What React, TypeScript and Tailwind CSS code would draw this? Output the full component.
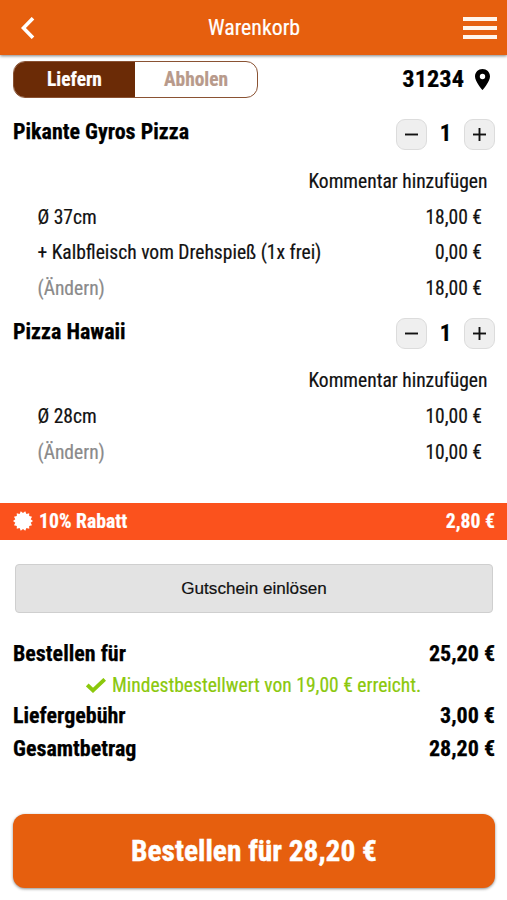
import React from "react";

type Option = { label: string; price: string; muted?: boolean };
type Item = { name: string; qty: number; options: Option[] };

const items: Item[] = [
  {
    name: "Pikante Gyros Pizza",
    qty: 1,
    options: [
      { label: "Ø 37cm", price: "18,00 €" },
      { label: "+ Kalbfleisch vom Drehspieß (1x frei)", price: "0,00 €" },
      { label: "(Ändern)", price: "18,00 €", muted: true },
    ],
  },
  {
    name: "Pizza Hawaii",
    qty: 1,
    options: [
      { label: "Ø 28cm", price: "10,00 €" },
      { label: "(Ändern)", price: "10,00 €", muted: true },
    ],
  },
];

function Stepper({ plus }: { plus?: boolean }) {
  return (
    <button className="flex h-[31px] w-[31px] items-center justify-center rounded-[9px] border border-[#dcdcdc] bg-[#efefef]">
      <svg width="13" height="13" viewBox="0 0 13 13" stroke="#111" strokeWidth="1.9">
        <path d="M0 6.5H13" />
        {plus && <path d="M6.5 0V13" />}
      </svg>
    </button>
  );
}

function CartItem({ item }: { item: Item }) {
  return (
    <section>
      <div className="flex h-[57px] justify-between pl-[13px] pr-3">
        <h2 className="mt-[12px] h-7 text-[22px] leading-7 font-bold text-black [-webkit-text-stroke:0.25px]">{item.name}</h2>
        <div className="mt-[12.5px] flex h-[31px] items-center">
          <Stepper />
          <span className="w-[37px] pt-px text-center text-[23px] font-bold text-black">{item.qty}</span>
          <Stepper plus />
        </div>
      </div>
      <div className="flex h-9 items-center justify-end pt-px pr-[19.5px]">Kommentar hinzufügen</div>
      {item.options.map((o) => (
        <div key={o.label} className="flex h-[35.5px] items-center justify-between pt-[1.5px] pl-[37.5px] pr-[25px]">
          <span className={o.muted ? "text-[#8a8a8a]" : ""}>{o.label}</span>
          <span>{o.price}</span>
        </div>
      ))}
    </section>
  );
}

function Total({ label, value }: { label: string; value: string }) {
  return (
    <div className="flex h-[32.5px] items-center justify-between pl-[13px] pr-3 text-[22px] font-bold text-black [-webkit-text-stroke:0.25px]">
      <span>{label}</span>
      <span>{value}</span>
    </div>
  );
}

// Fourteen-pointed seal outline.
const sealPoints = Array.from({ length: 28 }, (_, i) => {
  const r = i % 2 ? 10 : 7.9;
  const a = (i * Math.PI) / 14;
  return `${(10 + r * Math.sin(a)).toFixed(2)},${(10 - r * Math.cos(a)).toFixed(2)}`;
}).join(" ");

export default function App() {
  return (
    <main className="flex h-[900px] w-full flex-col overflow-hidden bg-white font-['Roboto_Condensed','Roboto',sans-serif] text-[19.55px] text-[#111] [-webkit-text-stroke:0.2px] [font-stretch:75%]">
      <header className="flex h-[55px] shrink-0 items-center justify-between bg-[#e65f0e] pl-[21px] pr-[10px] text-white shadow-[0_1px_3px_rgba(0,0,0,0.5)]">
        <svg width="24" height="22" viewBox="0 0 24 22" fill="none" stroke="white" strokeWidth="3.6">
          <path d="M12 1.2L2.4 11L12 20.8" />
        </svg>
        <h1 className="pt-[2px] text-[21.8px]">Warenkorb</h1>
        <div className="flex flex-col gap-[5px] pt-px">
          <i className="h-1 w-[34px] bg-[#fff5ec]" />
          <i className="h-1 w-[34px] bg-[#fff5ec]" />
          <i className="h-1 w-[34px] bg-[#fff5ec]" />
        </div>
      </header>

      <div className="mt-[6px] flex h-9 shrink-0 items-center justify-between pl-[13px] pr-[17px]">
        <div className="flex h-[37px] w-[245px] overflow-hidden rounded-[12px] border border-[#8a5233] text-[19.4px] font-bold">
          <span className="flex w-[121px] items-center justify-center bg-[#6b2b06] pt-[1.5px] text-white">Liefern</span>
          <span className="flex flex-1 items-center justify-center pt-[1.5px] text-[#b89a8b]">Abholen</span>
        </div>
        <div className="flex items-center gap-[11px] text-[24.4px] font-bold text-black">
          <span>31234</span>
          <svg width="15" height="21" viewBox="0 0 15 21">
            <path fillRule="evenodd" fill="#000" d="M7.5 0C3.3 0 0 3.2 0 7.4C0 12.6 7.5 21 7.5 21S15 12.6 15 7.4C15 3.2 11.7 0 7.5 0ZM7.5 4.8A2.7 2.7 0 1 1 7.5 10.2A2.7 2.7 0 1 1 7.5 4.8Z" />
          </svg>
        </div>
      </div>

      <div className="mt-[9px] shrink-0">
        {items.map((item) => (
          <CartItem key={item.name} item={item} />
        ))}
      </div>

      <div className="mt-[33.5px] flex h-[36.5px] shrink-0 items-center justify-between bg-[#fb521d] pt-px pl-[13px] pr-3 text-[19.7px] font-bold text-white">
        <span className="flex items-center gap-[6px]">
          <svg className="-mt-px" width="20" height="20" viewBox="0 0 20 20">
            <polygon points={sealPoints} fill="white" />
          </svg>
          10% Rabatt
        </span>
        <span>2,80 €</span>
      </div>

      <button className="mt-6 mr-[14px] ml-[15px] flex h-[49px] shrink-0 items-center justify-center rounded-[4px] border border-[#cfcfcf] bg-[#e3e3e3] pt-[2px] font-['Liberation_Sans',Arial,sans-serif] text-[17.1px] [font-stretch:100%]">
        Gutschein einlösen
      </button>

      <div className="mt-[24.5px] shrink-0">
        <Total label="Bestellen für" value="25,20 €" />
        <p className="flex h-[30px] items-center gap-[6px] pt-[1.5px] pl-[86px] text-[#8bc80c]">
          <svg width="20" height="15" viewBox="0 0 20 15" fill="none" stroke="#8bc80c" strokeWidth="3.8">
            <path d="M1.3 7L7 12.4L18.7 1.3" />
          </svg>
          Mindestbestellwert von 19,00 € erreicht.
        </p>
        <Total label="Liefergebühr" value="3,00 €" />
        <Total label="Gesamtbetrag" value="28,20 €" />
      </div>

      <button className="mt-[49.5px] mr-3 ml-[13px] flex h-[74px] shrink-0 items-center justify-center rounded-[12px] bg-[#e65f0e] text-[29.4px] font-bold text-white shadow-[0_1px_3px_rgba(0,0,0,0.45)] [-webkit-text-stroke:0.4px]">
        Bestellen für 28,20 €
      </button>
    </main>
  );
}
